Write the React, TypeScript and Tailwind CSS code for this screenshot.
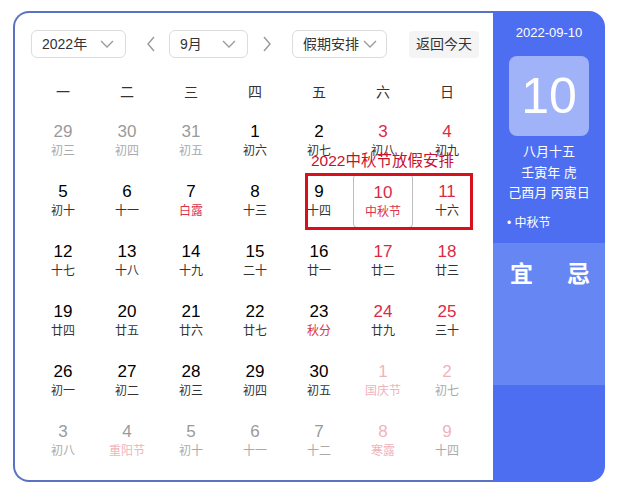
import React from 'react';

type Day = {
  n: number;
  l: string;
  out?: boolean; // not in current month
  wk?: boolean; // weekend (red number)
  fest?: boolean; // lunar text red
};

const rows: Day[][] = [
  [
    { n: 29, l: '初三', out: true },
    { n: 30, l: '初四', out: true },
    { n: 31, l: '初五', out: true },
    { n: 1, l: '初六' },
    { n: 2, l: '初七' },
    { n: 3, l: '初八', wk: true },
    { n: 4, l: '初九', wk: true },
  ],
  [
    { n: 5, l: '初十' },
    { n: 6, l: '十一' },
    { n: 7, l: '白露', fest: true },
    { n: 8, l: '十三' },
    { n: 9, l: '十四' },
    { n: 10, l: '中秋节', wk: true, fest: true },
    { n: 11, l: '十六', wk: true },
  ],
  [
    { n: 12, l: '十七' },
    { n: 13, l: '十八' },
    { n: 14, l: '十九' },
    { n: 15, l: '二十' },
    { n: 16, l: '廿一' },
    { n: 17, l: '廿二', wk: true },
    { n: 18, l: '廿三', wk: true },
  ],
  [
    { n: 19, l: '廿四' },
    { n: 20, l: '廿五' },
    { n: 21, l: '廿六' },
    { n: 22, l: '廿七' },
    { n: 23, l: '秋分', fest: true },
    { n: 24, l: '廿九', wk: true },
    { n: 25, l: '三十', wk: true },
  ],
  [
    { n: 26, l: '初一' },
    { n: 27, l: '初二' },
    { n: 28, l: '初三' },
    { n: 29, l: '初四' },
    { n: 30, l: '初五' },
    { n: 1, l: '国庆节', out: true, wk: true, fest: true },
    { n: 2, l: '初七', out: true, wk: true },
  ],
  [
    { n: 3, l: '初八', out: true },
    { n: 4, l: '重阳节', out: true, fest: true },
    { n: 5, l: '初十', out: true },
    { n: 6, l: '十一', out: true },
    { n: 7, l: '十二', out: true },
    { n: 8, l: '寒露', out: true, wk: true, fest: true },
    { n: 9, l: '十四', out: true, wk: true },
  ],
];

const weekdays = ['一', '二', '三', '四', '五', '六', '日'];

const Chevron = ({ className }: { className?: string }) => (
  <svg className={className} width="14" height="8" viewBox="0 0 14 8" fill="none" stroke="currentColor" strokeWidth="1.3">
    <path d="M1 1l6 6 6-6" />
  </svg>
);

const Select = ({ label, width }: { label: string; width: string }) => (
  <div className={`${width} h-[28px] border border-[#dcdcdc] rounded-[6px] flex items-center justify-between pl-[10px] pr-[11px] text-[14px] text-[#333]`}>
    <span>{label}</span>
    <Chevron className="text-[#999]" />
  </div>
);

const DayCell = ({ d }: { d: Day }) => {
  const selected = d.n === 10 && !d.out;
  let numColor = 'text-black';
  let lunarColor = 'text-[#333]';
  if (d.out) {
    numColor = d.wk ? 'text-[#f1b3bb]' : 'text-[#9a9a9a]';
    lunarColor = d.fest ? 'text-[#f1b3bb]' : 'text-[#aaa]';
  } else {
    if (d.wk) numColor = 'text-[#dc2a45]';
    if (d.fest) lunarColor = 'text-[#d9334d]';
  }
  return (
    <div className="h-[60px] p-[2px]">
      <div
        className={`h-[54px] flex flex-col items-center pt-[8px] rounded-[4px] ${
          selected ? 'border border-[#bdbdbd] pt-[7px]' : ''
        }`}
      >
        <span className={`text-[17px] leading-[20px] ${numColor}`}>{d.n}</span>
        <span className={`text-[12px] leading-[16px] mt-[1px] ${lunarColor}`}>{d.l}</span>
      </div>
    </div>
  );
};

export default function App() {
  return (
    <div
      className="relative w-[617px] h-[492px] bg-white pl-[13px] pt-[11px]"
      style={{ fontFamily: '"Liberation Sans", "Noto Sans CJK SC", sans-serif' }}
    >
      <div className="flex w-[592px] h-[471px]">
        {/* calendar */}
        <div className="w-[480px] h-full border-2 border-r-0 border-[#5a72c4] rounded-l-[16px] pl-[16px] pt-[17px]">
          <div className="flex items-center h-[28px]">
            <Select label="2022年" width="w-[95px]" />
            <svg className="ml-[20px] text-[#999]" width="10" height="16" viewBox="0 0 10 16" fill="none" stroke="currentColor" strokeWidth="1.4">
              <path d="M8 1L2 8l6 7" />
            </svg>
            <div className="ml-[13px]">
              <Select label="9月" width="w-[79px]" />
            </div>
            <svg className="ml-[14px] text-[#999]" width="10" height="16" viewBox="0 0 10 16" fill="none" stroke="currentColor" strokeWidth="1.4">
              <path d="M2 1l6 7-6 7" />
            </svg>
            <div className="ml-[20px]">
              <div className="w-[95px] h-[28px] border border-[#dcdcdc] rounded-[6px] flex items-center justify-between pl-[10px] pr-[9px] text-[14px] text-[#333]">
                <span>假期安排</span>
                <Chevron className="text-[#999]" />
              </div>
            </div>
            <div className="ml-[22px] h-[27px] px-[7px] bg-[#f4f4f4] rounded-[4px] flex items-center text-[14px] text-[#333]">
              返回今天
            </div>
          </div>

          <div className="grid grid-cols-7 w-[448px] mt-[14px]">
            {weekdays.map((w) => (
              <div key={w} className="h-[40px] flex items-center justify-center text-[14px] text-[#333]">
                {w}
              </div>
            ))}
          </div>
          <div className="grid grid-cols-7 w-[448px]">
            {rows.flat().map((d, i) => (
              <DayCell key={i} d={d} />
            ))}
          </div>
        </div>

        {/* side panel */}
        <div className="w-[112px] h-full bg-[#4e6ef1] rounded-r-[16px] flex flex-col text-white">
          <div className="pt-[13px] text-center text-[13px] leading-[18px]">2022-09-10</div>
          <div className="mx-auto mt-[14px] w-[80px] h-[80px] rounded-[8px] bg-[#a0b3f8] flex items-center justify-center text-[50px] leading-none">
            10
          </div>
          <div className="mt-[6px] text-center text-[13px] leading-[20.5px]">
            <div>八月十五</div>
            <div>壬寅年 虎</div>
            <div>己酉月 丙寅日</div>
          </div>
          <div className="mt-[11px] pl-[14px] text-[12px] leading-[16px]">• 中秋节</div>
          <div className="mt-[12px] h-[142px] bg-[#6686f3] flex justify-between pl-[17px] pr-[15px] pt-[17px] text-[23px] leading-[28px] font-semibold">
            <span>宜</span>
            <span>忌</span>
          </div>
        </div>
      </div>

      {/* annotation */}
      <div className="absolute left-[311px] top-[151px] text-[15.5px] leading-[20px] text-[#c8102e]">2022中秋节放假安排</div>
      <div className="absolute left-[305px] top-[173px] w-[168px] h-[57px] border-[3px] border-[#d7101c]" />
    </div>
  );
}
